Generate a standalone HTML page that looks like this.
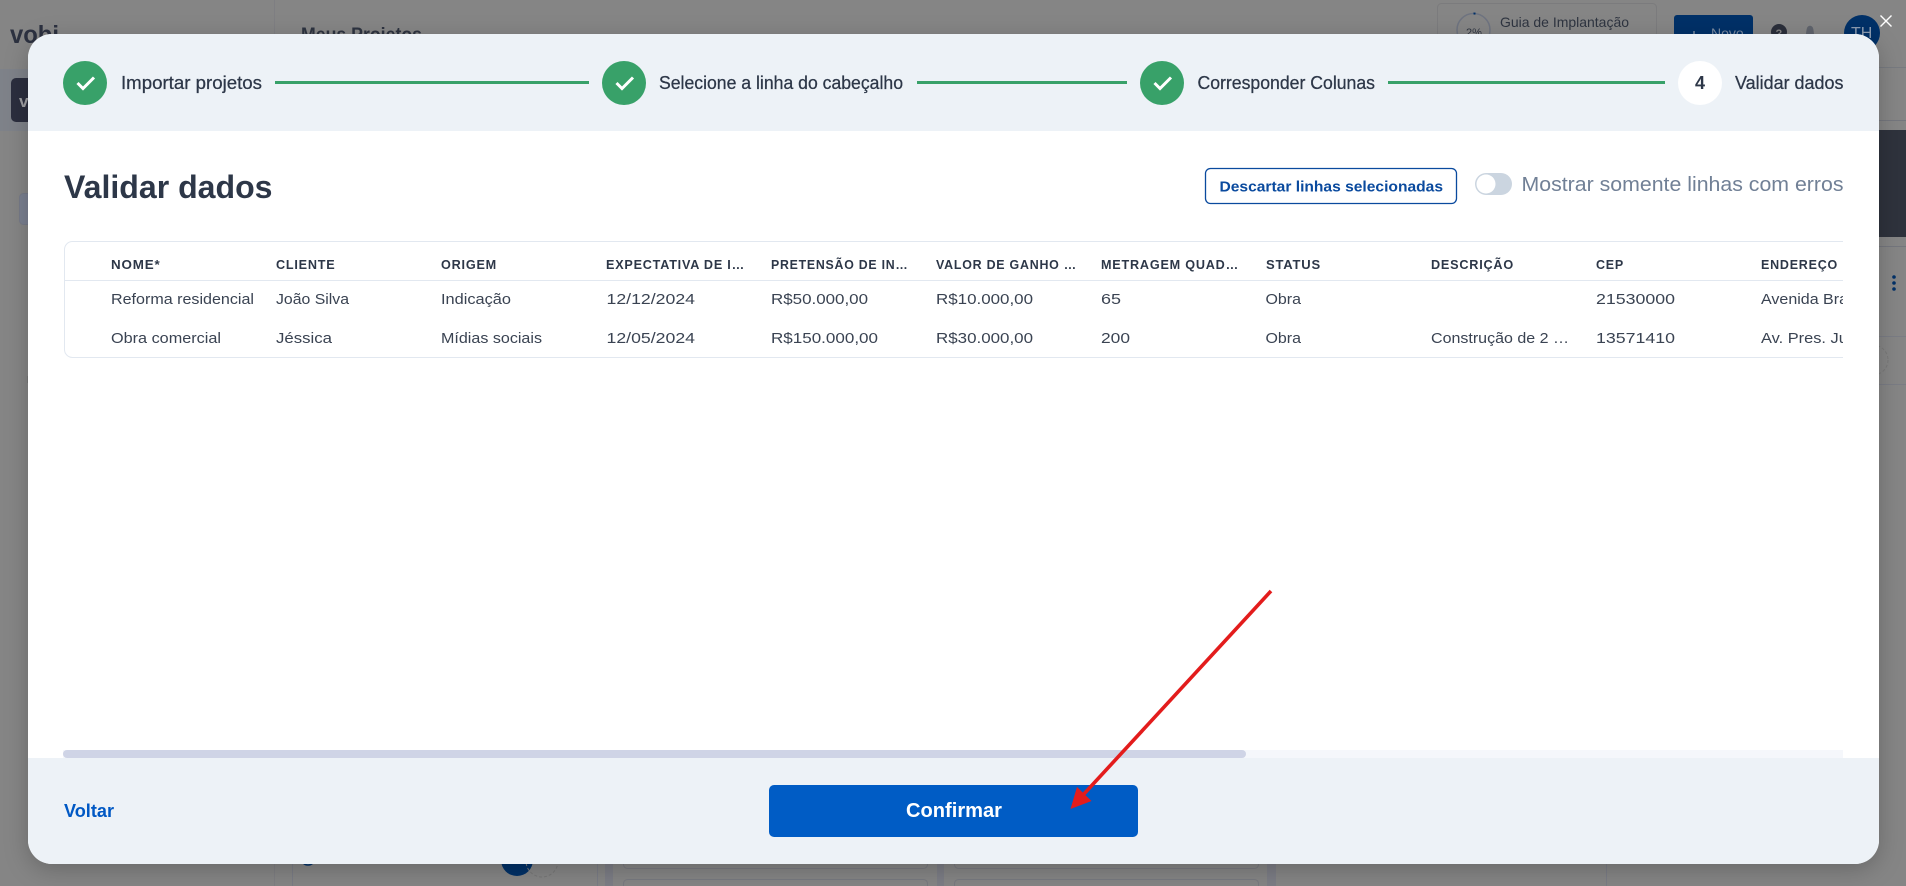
<!DOCTYPE html>
<html lang="pt-BR">
<head>
<meta charset="utf-8">
<title>Validar dados</title>
<style>
html,body{margin:0;padding:0;width:1906px;height:886px;overflow:hidden;background:#858585}
svg{display:block;position:absolute;left:0;top:0}
text{font-family:"Liberation Sans",sans-serif}
.step{font-size:18px;fill:#2d3748;stroke:#2d3748;stroke-width:.25px}
.th{font-size:13px;font-weight:bold;fill:#2d3748;letter-spacing:.8px}
.td{font-size:14.5px;fill:#3a4352}
</style>
</head>
<body>
<svg width="1906" height="886" viewBox="0 0 1906 886" xmlns="http://www.w3.org/2000/svg">
<defs>
<clipPath id="modal"><rect x="28" y="34" width="1851" height="830" rx="24"/></clipPath>
<clipPath id="tbl"><rect x="64" y="241" width="1779" height="117"/></clipPath>
<filter id="sh" x="-5%" y="-5%" width="110%" height="115%"><feDropShadow dx="0" dy="6" stdDeviation="12" flood-color="#000" flood-opacity=".22"/></filter>
</defs>

<!-- dimmed page behind -->
<rect width="1906" height="886" fill="#858585"/>
<rect x="0" y="69" width="274" height="62" fill="#7e8289"/>
<line x1="274.5" y1="0" x2="274.5" y2="886" stroke="#7e7e82"/>
<line x1="292.5" y1="850" x2="292.5" y2="886" stroke="#7a7c85"/>
<text x="10" y="43" font-size="25" font-weight="bold" fill="#2c3140" textLength="49" lengthAdjust="spacingAndGlyphs">vobi</text>
<rect x="11" y="78" width="40" height="44" rx="5" fill="#2b2e3e"/>
<text x="19" y="107" font-size="17" font-weight="bold" fill="#a0a0a4">vo</text>
<rect x="19.5" y="193.5" width="30" height="31" rx="4" fill="#7a8090" stroke="#767a88"/>
<rect x="27" y="376" width="2" height="7" fill="#787878"/>
<text x="301" y="41" font-size="19" font-weight="bold" fill="#2d3340" textLength="121" lengthAdjust="spacingAndGlyphs">Meus Projetos</text>

<rect x="1437.5" y="3.5" width="219" height="60" rx="4" fill="#858585" stroke="#7b7b7d"/>
<circle cx="1473.5" cy="30" r="16.5" fill="none" stroke="#6e7380" stroke-width="1.5"/>
<path d="M1473.5 13.5a16.5 16.5 0 0 1 2 .1" fill="none" stroke="#003067" stroke-width="2"/>
<text x="1466" y="36" font-size="11" fill="#2e3440">2%</text>
<text x="1500" y="27" font-size="14" fill="#2e3440" textLength="129" lengthAdjust="spacingAndGlyphs">Guia de Implantação</text>
<rect x="1674" y="15" width="79" height="30" rx="3" fill="#003067"/>
<path d="M1694 31v10M1689 36h11" stroke="#7a8aa0" stroke-width="1.5"/>
<text x="1711" y="38" font-size="14" fill="#7a8aa0">Novo</text>
<circle cx="1779" cy="32" r="8" fill="#2a2e3a"/>
<text x="1775.5" y="37" font-size="11" font-weight="bold" fill="#858585">?</text>
<path d="M1805 40c1-3 1-9 2-12 1-3 5-3 6 0 1 3 1 9 2 12z" fill="#5f636c"/>
<circle cx="1862" cy="33" r="18" fill="#003067"/>
<text x="1851" y="38" font-size="16" fill="#8b9bb0">TH</text>
<path d="M1880.5 15.5l11 11M1891.5 15.5l-11 11" stroke="#fff" stroke-width="1.4"/>

<line x1="1660" y1="67.5" x2="1906" y2="67.5" stroke="#777a80"/>
<line x1="1660" y1="120.5" x2="1906" y2="120.5" stroke="#74767d"/>
<rect x="1870" y="130" width="36" height="107" fill="#2e323c"/>
<line x1="1870" y1="246.5" x2="1906" y2="246.5" stroke="#74767d"/>
<circle cx="1894" cy="277" r="1.8" fill="#003067"/><circle cx="1894" cy="283" r="1.8" fill="#003067"/><circle cx="1894" cy="289" r="1.8" fill="#003067"/>
<line x1="1870" y1="336.5" x2="1906" y2="336.5" stroke="#7a7c84"/>
<line x1="1870" y1="384.5" x2="1906" y2="384.5" stroke="#7a7c84"/>
<circle cx="1873" cy="360" r="15" fill="none" stroke="#797979" stroke-dasharray="3 2"/>

<circle cx="308" cy="858" r="7" fill="none" stroke="#003067" stroke-width="1.5"/>
<circle cx="517" cy="860" r="16" fill="#003067"/>
<circle cx="542" cy="861" r="16" fill="none" stroke="#777" stroke-dasharray="3 2"/>
<line x1="597.5" y1="850" x2="597.5" y2="886" stroke="#7a7c85"/>
<rect x="605" y="850" width="8" height="36" fill="#7c7d85"/>
<rect x="623.5" y="840.5" width="304" height="28" rx="4" fill="none" stroke="#78797f"/>
<rect x="623.5" y="879.5" width="304" height="28" rx="4" fill="none" stroke="#78797f"/>
<rect x="937" y="850" width="7" height="36" fill="#7c7d85"/>
<rect x="954.5" y="840.5" width="304" height="28" rx="4" fill="none" stroke="#78797f"/>
<rect x="954.5" y="879.5" width="304" height="28" rx="4" fill="none" stroke="#78797f"/>
<rect x="1267" y="850" width="9" height="36" fill="#7c7d85"/>
<line x1="1606.5" y1="850" x2="1606.5" y2="886" stroke="#7a7c85"/>

<!-- modal -->
<rect x="28" y="34" width="1851" height="830" rx="24" fill="#fff" filter="url(#sh)"/>
<g clip-path="url(#modal)">
<rect x="28" y="34" width="1851" height="97" fill="#edf2f7"/>
<rect x="28" y="758" width="1851" height="106" fill="#edf2f7"/>
</g>

<!-- stepper -->
<g>
<circle cx="85" cy="83" r="22" fill="#38a169"/>
<path d="M77.5 83l5.5 5.5 11-11" fill="none" stroke="#fff" stroke-width="3"/>
<text class="step" x="121" y="89" textLength="141" lengthAdjust="spacingAndGlyphs">Importar projetos</text>
<rect x="275" y="81" width="314" height="3" fill="#38a169"/>
<circle cx="624" cy="83" r="22" fill="#38a169"/>
<path d="M616.5 83l5.5 5.5 11-11" fill="none" stroke="#fff" stroke-width="3"/>
<text class="step" x="659" y="89" textLength="244" lengthAdjust="spacingAndGlyphs">Selecione a linha do cabeçalho</text>
<rect x="917" y="81" width="210" height="3" fill="#38a169"/>
<circle cx="1162" cy="83" r="22" fill="#38a169"/>
<path d="M1154.5 83l5.5 5.5 11-11" fill="none" stroke="#fff" stroke-width="3"/>
<text class="step" x="1197.5" y="89" textLength="177.5" lengthAdjust="spacingAndGlyphs">Corresponder Colunas</text>
<rect x="1388" y="81" width="277" height="3" fill="#38a169"/>
<circle cx="1700" cy="83" r="22" fill="#fff"/>
<text x="1700" y="89" font-size="18" font-weight="bold" fill="#2d3748" text-anchor="middle">4</text>
<text class="step" x="1735" y="89" textLength="108.5" lengthAdjust="spacingAndGlyphs">Validar dados</text>
</g>

<!-- title row -->
<text x="64" y="198" font-size="32" font-weight="bold" fill="#2d3748" textLength="208.5" lengthAdjust="spacingAndGlyphs">Validar dados</text>
<rect x="1205.5" y="168.5" width="251" height="35" rx="5" fill="#fff" stroke="#0a4a9e" stroke-width="1.3"/>
<text x="1219.5" y="191.5" font-size="15" font-weight="bold" fill="#0a4a9e" textLength="223.5" lengthAdjust="spacingAndGlyphs">Descartar linhas selecionadas</text>
<rect x="1475" y="173" width="37" height="22" rx="11" fill="#cbd5e0"/>
<circle cx="1486" cy="184" r="9.5" fill="#fff"/>
<text x="1521.5" y="191" font-size="20" fill="#718096" textLength="322" lengthAdjust="spacingAndGlyphs">Mostrar somente linhas com erros</text>

<!-- table -->
<rect x="64.5" y="241.5" width="1790" height="116" rx="8" fill="#fff" stroke="#e2e8f0" clip-path="url(#tbl)"/>
<line x1="65" y1="280.5" x2="1843" y2="280.5" stroke="#e2e8f0"/>
<g clip-path="url(#tbl)">
<text class="th" x="111" y="269" textLength="49.5" lengthAdjust="spacingAndGlyphs">NOME*</text>
<text class="th" x="276" y="269" textLength="59.5" lengthAdjust="spacingAndGlyphs">CLIENTE</text>
<text class="th" x="441" y="269" textLength="56" lengthAdjust="spacingAndGlyphs">ORIGEM</text>
<text class="th" x="606" y="269" textLength="139" lengthAdjust="spacingAndGlyphs">EXPECTATIVA DE I…</text>
<text class="th" x="771" y="269" textLength="137.5" lengthAdjust="spacingAndGlyphs">PRETENSÃO DE IN…</text>
<text class="th" x="936" y="269" textLength="141" lengthAdjust="spacingAndGlyphs">VALOR DE GANHO …</text>
<text class="th" x="1101" y="269" textLength="138" lengthAdjust="spacingAndGlyphs">METRAGEM QUAD…</text>
<text class="th" x="1266" y="269" textLength="55" lengthAdjust="spacingAndGlyphs">STATUS</text>
<text class="th" x="1431" y="269" textLength="83" lengthAdjust="spacingAndGlyphs">DESCRIÇÃO</text>
<text class="th" x="1596" y="269" textLength="28" lengthAdjust="spacingAndGlyphs">CEP</text>
<text class="th" x="1761" y="269" textLength="77" lengthAdjust="spacingAndGlyphs">ENDEREÇO</text>

<text class="td" x="111" y="304" textLength="143" lengthAdjust="spacingAndGlyphs">Reforma residencial</text>
<text class="td" x="276" y="304" textLength="73" lengthAdjust="spacingAndGlyphs">João Silva</text>
<text class="td" x="441" y="304" textLength="70" lengthAdjust="spacingAndGlyphs">Indicação</text>
<text class="td" x="606.5" y="304" textLength="88.5" lengthAdjust="spacingAndGlyphs">12/12/2024</text>
<text class="td" x="771" y="304" textLength="97" lengthAdjust="spacingAndGlyphs">R$50.000,00</text>
<text class="td" x="936" y="304" textLength="97" lengthAdjust="spacingAndGlyphs">R$10.000,00</text>
<text class="td" x="1101" y="304" textLength="20" lengthAdjust="spacingAndGlyphs">65</text>
<text class="td" x="1265.5" y="304" textLength="35.5" lengthAdjust="spacingAndGlyphs">Obra</text>
<text class="td" x="1596" y="304" textLength="79" lengthAdjust="spacingAndGlyphs">21530000</text>
<text class="td" x="1761" y="304" textLength="95" lengthAdjust="spacingAndGlyphs">Avenida Bras</text>

<text class="td" x="111" y="343" textLength="110" lengthAdjust="spacingAndGlyphs">Obra comercial</text>
<text class="td" x="276" y="343" textLength="56" lengthAdjust="spacingAndGlyphs">Jéssica</text>
<text class="td" x="441" y="343" textLength="101" lengthAdjust="spacingAndGlyphs">Mídias sociais</text>
<text class="td" x="606.5" y="343" textLength="88.5" lengthAdjust="spacingAndGlyphs">12/05/2024</text>
<text class="td" x="771" y="343" textLength="107" lengthAdjust="spacingAndGlyphs">R$150.000,00</text>
<text class="td" x="936" y="343" textLength="97" lengthAdjust="spacingAndGlyphs">R$30.000,00</text>
<text class="td" x="1101" y="343" textLength="29" lengthAdjust="spacingAndGlyphs">200</text>
<text class="td" x="1265.5" y="343" textLength="35.5" lengthAdjust="spacingAndGlyphs">Obra</text>
<text class="td" x="1431" y="343" textLength="138" lengthAdjust="spacingAndGlyphs">Construção de 2 …</text>
<text class="td" x="1596" y="343" textLength="79" lengthAdjust="spacingAndGlyphs">13571410</text>
<text class="td" x="1761" y="343" textLength="95" lengthAdjust="spacingAndGlyphs">Av. Pres. Jus</text>
</g>

<!-- scrollbar -->
<rect x="63" y="750" width="1780" height="8" fill="#f5f7fb"/>
<rect x="63" y="750" width="1183" height="8" rx="4" fill="#cfd4e6"/>

<!-- footer -->
<text x="64" y="817" font-size="18" font-weight="bold" fill="#0058c4" textLength="50" lengthAdjust="spacingAndGlyphs">Voltar</text>
<rect x="769" y="785" width="369" height="52" rx="5" fill="#005cc5"/>
<text x="906" y="817" font-size="20" font-weight="bold" fill="#fff" textLength="96" lengthAdjust="spacingAndGlyphs">Confirmar</text>

<!-- annotation arrow -->
<line x1="1271" y1="591" x2="1083" y2="795" stroke="#e31c1c" stroke-width="3.6"/>
<path d="M1070.5 809L1077 787 1091.5 801z" fill="#e31c1c"/>
</svg>
</body>
</html>
